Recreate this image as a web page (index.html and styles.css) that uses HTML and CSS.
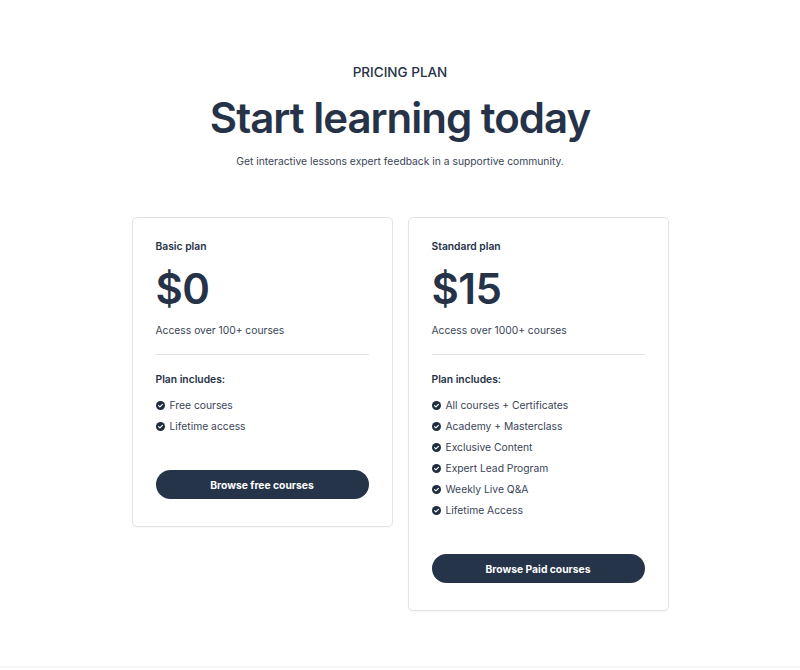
FILE: index.html
```html
<!DOCTYPE html>
<html>
<head>
<meta charset="utf-8">
<link rel="stylesheet" href="styles.css">
</head>
<body>
<main class="page">
  <header class="hero">
    <p class="eyebrow">PRICING PLAN</p>
    <h1 class="title">Start learning today</h1>
    <p class="subtitle">Get interactive lessons expert feedback in a supportive community.</p>
  </header>
  <section class="plans">
    <article class="card">
      <h2 class="plan-name">Basic plan</h2>
      <div class="price">$0</div>
      <p class="desc">Access over 100+ courses</p>
      <hr class="divider">
      <h3 class="includes">Plan includes:</h3>
      <ul class="features">
        <li><svg class="check" viewBox="0 0 16 16"><circle cx="8" cy="8" r="8" fill="#1f2d40"/><path d="M4.6 8.3l2.3 2.2 4.5-4.6" fill="none" stroke="#fff" stroke-width="2" stroke-linecap="round" stroke-linejoin="round"/></svg>Free courses</li>
        <li><svg class="check" viewBox="0 0 16 16"><circle cx="8" cy="8" r="8" fill="#1f2d40"/><path d="M4.6 8.3l2.3 2.2 4.5-4.6" fill="none" stroke="#fff" stroke-width="2" stroke-linecap="round" stroke-linejoin="round"/></svg>Lifetime access</li>
      </ul>
      <button class="btn">Browse free courses</button>
    </article>
    <article class="card">
      <h2 class="plan-name">Standard plan</h2>
      <div class="price">$15</div>
      <p class="desc">Access over 1000+ courses</p>
      <hr class="divider">
      <h3 class="includes">Plan includes:</h3>
      <ul class="features">
        <li><svg class="check" viewBox="0 0 16 16"><circle cx="8" cy="8" r="8" fill="#1f2d40"/><path d="M4.6 8.3l2.3 2.2 4.5-4.6" fill="none" stroke="#fff" stroke-width="2" stroke-linecap="round" stroke-linejoin="round"/></svg>All courses + Certificates</li>
        <li><svg class="check" viewBox="0 0 16 16"><circle cx="8" cy="8" r="8" fill="#1f2d40"/><path d="M4.6 8.3l2.3 2.2 4.5-4.6" fill="none" stroke="#fff" stroke-width="2" stroke-linecap="round" stroke-linejoin="round"/></svg>Academy + Masterclass</li>
        <li><svg class="check" viewBox="0 0 16 16"><circle cx="8" cy="8" r="8" fill="#1f2d40"/><path d="M4.6 8.3l2.3 2.2 4.5-4.6" fill="none" stroke="#fff" stroke-width="2" stroke-linecap="round" stroke-linejoin="round"/></svg>Exclusive Content</li>
        <li><svg class="check" viewBox="0 0 16 16"><circle cx="8" cy="8" r="8" fill="#1f2d40"/><path d="M4.6 8.3l2.3 2.2 4.5-4.6" fill="none" stroke="#fff" stroke-width="2" stroke-linecap="round" stroke-linejoin="round"/></svg>Expert Lead Program</li>
        <li><svg class="check" viewBox="0 0 16 16"><circle cx="8" cy="8" r="8" fill="#1f2d40"/><path d="M4.6 8.3l2.3 2.2 4.5-4.6" fill="none" stroke="#fff" stroke-width="2" stroke-linecap="round" stroke-linejoin="round"/></svg>Weekly Live Q&amp;A</li>
        <li><svg class="check" viewBox="0 0 16 16"><circle cx="8" cy="8" r="8" fill="#1f2d40"/><path d="M4.6 8.3l2.3 2.2 4.5-4.6" fill="none" stroke="#fff" stroke-width="2" stroke-linecap="round" stroke-linejoin="round"/></svg>Lifetime Access</li>
      </ul>
      <button class="btn">Browse Paid courses</button>
    </article>
  </section>
</main>
</body>
</html>
```
FILE: styles.css
```css
* { box-sizing: border-box; }
html, body { margin: 0; padding: 0; background: #fff; }
body {
  font-family: Inter, "Noto Sans", sans-serif;
  color: #253247;
}
.page {
  min-height: 668px;
  border-bottom: 2px solid #f6f6f6;
  padding-top: 63px;
}
.hero { text-align: center; }
.eyebrow {
  margin: 0;
  font-size: 13.5px;
  font-weight: 500;
  line-height: 18px;
}
.title {
  margin: 12px 0 0;
  font-size: 42px;
  font-weight: 600;
  line-height: 50px;
  letter-spacing: -1px;
}
.subtitle {
  margin: 11px 0 0;
  font-size: 10.3px;
  line-height: 14px;
  color: #3a4557;
}
.plans {
  display: flex;
  justify-content: center;
  align-items: flex-start;
  gap: 15px;
  margin-top: 49px;
}
.card {
  width: 261px;
  border: 1px solid #e3e3e6;
  border-radius: 5px;
  padding: 21px 23px 27px 23px;
  box-shadow: 0 1px 2px rgba(0,0,0,0.04);
}
.plan-name {
  margin: 0;
  font-size: 10.3px;
  font-weight: 600;
  line-height: 14px;
}
.price {
  margin-top: 11px;
  font-size: 42px;
  font-weight: 600;
  line-height: 50px;
  letter-spacing: -0.5px;
}
.desc {
  margin: 9px 0 0;
  font-size: 10.3px;
  line-height: 14px;
  color: #3a4557;
}
.divider {
  margin: 17px 0 0;
  border: 0;
  border-top: 1px solid #e3e3e6;
}
.includes {
  margin: 17px 0 0;
  font-size: 10.3px;
  font-weight: 600;
  line-height: 14px;
}
.features {
  list-style: none;
  margin: 12px 0 0;
  padding: 0;
  display: flex;
  flex-direction: column;
  gap: 7px;
}
.features li {
  display: flex;
  align-items: center;
  gap: 5px;
  font-size: 10.3px;
  line-height: 14px;
  color: #3a4557;
}
.check { width: 9px; height: 9px; flex: none; }
.btn {
  display: block;
  width: 100%;
  height: 29px;
  margin-top: 37px;
  border: 0;
  border-radius: 15px;
  background: #253449;
  color: #fff;
  font-family: Inter, "Noto Sans", sans-serif;
  font-size: 10.3px;
  font-weight: 700;
}
```
